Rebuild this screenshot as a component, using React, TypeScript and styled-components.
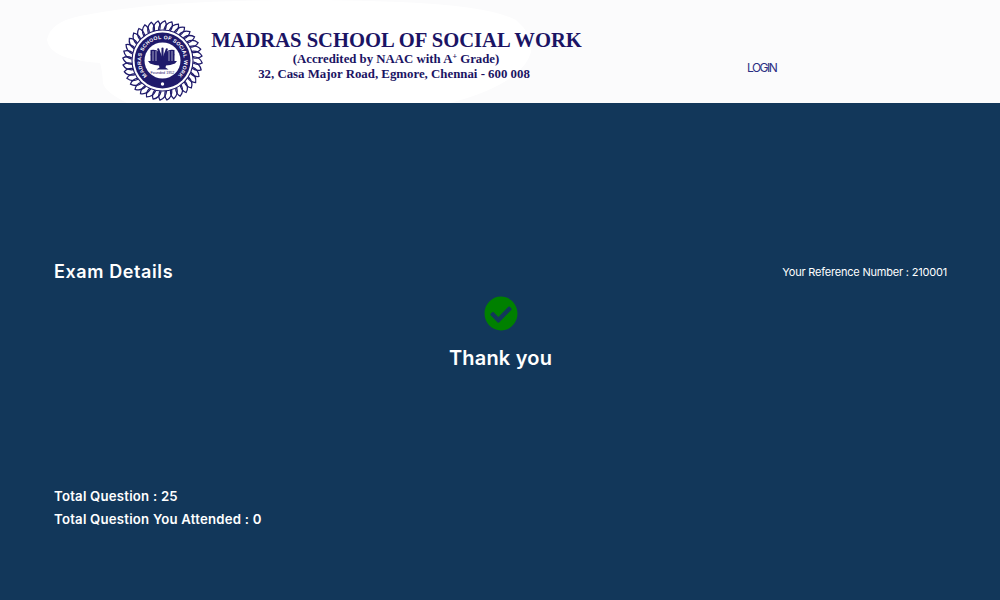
import React from "react";
import styled, { createGlobalStyle } from "styled-components";
import { FaCheckCircle } from "react-icons/fa";

const Global = createGlobalStyle`
  html, body { margin: 0; padding: 0; background: #12375a; }
  #root { width: 1000px; height: 600px; overflow: hidden; }
`;

const Page = styled.div`
  width: 1000px;
  height: 600px;
  display: flex;
  flex-direction: column;
  background: #12375a;
  color: #fff;
  font-family: "Inter", "Liberation Sans", sans-serif;
`;

const Header = styled.header`
  position: relative;
  height: 103px;
  flex: none;
  display: flex;
  align-items: flex-start;
  padding: 20px 0 0 122px;
  box-sizing: border-box;
  background: #fbfbfc;
  overflow: hidden;
`;

const Blob = styled.svg`
  position: absolute;
  left: 0;
  top: 0;
  width: 1000px;
  height: 103px;
`;

const LogoMark = styled.svg`
  position: relative;
  width: 81px;
  height: 81px;
  flex: none;
`;

const Titles = styled.div`
  position: relative;
  width: 371px;
  margin-left: 8px;
  margin-top: 8px;
  display: flex;
  flex-direction: column;
  align-items: center;
  font-family: "Liberation Serif", "Times New Roman", serif;
  font-weight: 700;
  color: #1b1464;
`;

const SchoolName = styled.div`
  font-size: 20.6px;
  line-height: 25px;
  white-space: nowrap;
`;

const Accredit = styled.div`
  font-size: 12.8px;
  line-height: 14px;
  margin: -1px 1px 0 0;
  white-space: nowrap;
  sup { font-size: 8px; line-height: 0; vertical-align: 4px; }
`;

const Address = styled.div`
  font-size: 12.85px;
  line-height: 14px;
  margin: 1px 5px 0 0;
  white-space: nowrap;
`;

const Login = styled.a`
  position: relative;
  margin-left: 165px;
  margin-top: 40px;
  font-size: 12px;
  line-height: 16px;
  letter-spacing: -1.5px;
  color: #2b2e83;
`;

const Main = styled.main`
  flex: 1;
  display: flex;
  flex-direction: column;
  padding: 156px 53px 0 54px;
`;

const TopRow = styled.div`
  display: flex;
  justify-content: space-between;
  align-items: center;
  height: 26px;
`;

const Heading = styled.h2`
  margin: 0 0 2px;
  font-size: 18px;
  font-weight: 600;
  letter-spacing: 0.6px;
`;

const Reference = styled.div`
  font-size: 11px;
  font-weight: 400;
  letter-spacing: -0.2px;
`;

const Result = styled.div`
  display: flex;
  flex-direction: column;
  align-items: center;
  margin-top: 11px;
  svg { width: 34px; height: 35px; color: #008000; display: block; }
`;

const Thanks = styled.div`
  margin-top: 14px;
  font-size: 20px;
  line-height: 26px;
  font-weight: 600;
  letter-spacing: 0.2px;
`;

const Stats = styled.div`
  margin-top: 116px;
  display: flex;
  flex-direction: column;
  gap: 5px;
`;

const Stat = styled.div`
  font-size: 13.2px;
  line-height: 18px;
  font-weight: 600;
  letter-spacing: 0.22px;
`;

const petals = Array.from({ length: 36 }, (_, i) => i * 10);
const fanBlades = [-60, -40, -20, 0, 20, 40, 60];

const Logo = () => (
  <LogoMark viewBox="0 0 81 81" aria-label="Madras School of Social Work seal">
    <defs>
      <path id="sealArc" d="M 26.7 57 A 21.5 21.5 0 1 1 54.3 57" fill="none" />
    </defs>
    {petals.map((r) => (
      <path
        key={r}
        d="M36.5 10 Q37 3 43 0.8 Q45.5 5 43 10"
        fill="none"
        stroke="#1f1a6b"
        strokeWidth="1.25"
        transform={`rotate(${r} 40.5 40.5)`}
      />
    ))}
    <circle cx="40.5" cy="40.5" r="30.5" fill="#fff" stroke="#1f1a6b" strokeWidth="1.1" />
    <circle cx="40.5" cy="40.5" r="28" fill="#1f1a6b" />
    <circle cx="40.5" cy="40.5" r="18" fill="#fff" />
    <text fontFamily="Liberation Sans, sans-serif" fontSize="5.1" fontWeight="700" fill="#fff" letterSpacing="0.3">
      <textPath href="#sealArc" startOffset="50%" textAnchor="middle">MADRAS SCHOOL OF SOCIAL WORK</textPath>
    </text>
    <circle cx="40.5" cy="64" r="1.7" fill="#fff" />
    <g stroke="#1f1a6b" strokeWidth="2.1" strokeLinecap="round">
      {fanBlades.map((a) => (
        <path key={a} d="M40.5 41 V28.5" transform={`rotate(${a} 40.5 41)`} />
      ))}
    </g>
    <g fill="#1f1a6b">
      <path d="M28.5 30 Q34 28.5 38 33 V41 H28.5 Z" />
      <path d="M52.5 30 Q47 28.5 43 33 V41 H52.5 Z" />
      <path d="M26 41 H55 L53 43.5 Q48 45.5 44 45.5 L43.5 47.5 L46.5 49.5 H34.5 L37.5 47.5 L37 45.5 Q33 45.5 28 43.5 Z" />
    </g>
    <g stroke="#fff" strokeWidth="0.6">
      <path d="M31 31 V41 M34 31 V41 M47 31 V41 M50 31 V41" />
    </g>
    <text x="40.5" y="54" textAnchor="middle" fontFamily="Liberation Sans, sans-serif" fontSize="3.7" fill="#1f1a6b">Founded 1952</text>
  </LogoMark>
);

export default function App() {
  return (
    <Page>
      <Global />
      <Header>
        <Blob viewBox="0 0 1000 103" aria-hidden="true">
          <path
            d="M47 40 Q50 22 80 16 Q120 8 170 4 Q280 -3 400 2 Q490 6 516 20 Q545 45 520 70 Q500 90 450 103 L127 103 Q105 92 103 83 Q102 68 100 63 Q50 60 47 40 Z"
            fill="#ffffff"
          />
        </Blob>
        <Logo />
        <Titles>
          <SchoolName>MADRAS SCHOOL OF SOCIAL WORK</SchoolName>
          <Accredit>
            (Accredited by NAAC with A<sup>+</sup> Grade)
          </Accredit>
          <Address>32, Casa Major Road, Egmore, Chennai - 600 008</Address>
        </Titles>
        <Login>LOGIN</Login>
      </Header>
      <Main>
        <TopRow>
          <Heading>Exam Details</Heading>
          <Reference>Your Reference Number : 210001</Reference>
        </TopRow>
        <Result>
          <FaCheckCircle preserveAspectRatio="none" />
          <Thanks>Thank you</Thanks>
        </Result>
        <Stats>
          <Stat>Total Question : 25</Stat>
          <Stat>Total Question You Attended : 0</Stat>
        </Stats>
      </Main>
    </Page>
  );
}
